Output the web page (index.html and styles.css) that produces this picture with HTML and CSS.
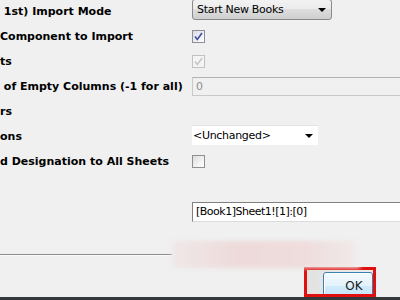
FILE: index.html
```html
<!DOCTYPE html>
<html lang="en">
<head>
    <meta charset="UTF-8">
    <title>Import Options</title>
    <link rel="stylesheet" href="styles.css">
</head>
<body>
    <div class="dialog">
        <div class="form">
            <div class="row">
                <span class="label">&nbsp;1st) Import Mode</span>
                <div class="combo combo-mode">
                    <span>Start New Books</span>
                    <span class="arrow"></span>
                </div>
            </div>
            <div class="row">
                <span class="label">Component to Import</span>
                <span class="check checked">
                    <svg width="9" height="9" viewBox="0 0 9 9"><path d="M1 4.5 L3.3 7.5 L8 1" fill="none" stroke="#3c4fa0" stroke-width="1.6"/></svg>
                </span>
            </div>
            <div class="row">
                <span class="label">ts</span>
                <span class="check disabled">
                    <svg width="9" height="9" viewBox="0 0 9 9"><path d="M1 4.5 L3.3 7.5 L8 1" fill="none" stroke="#c4c4c4" stroke-width="1.4"/></svg>
                </span>
            </div>
            <div class="row">
                <span class="label">&nbsp;of Empty Columns (-1 for all)</span>
                <div class="textbox textbox-disabled">0</div>
            </div>
            <div class="row">
                <span class="label">rs</span>
            </div>
            <div class="row">
                <span class="label">ons</span>
                <div class="combo combo-flat">
                    <span>&lt;Unchanged&gt;</span>
                    <span class="arrow"></span>
                </div>
            </div>
            <div class="row">
                <span class="label">d Designation to All Sheets</span>
                <span class="check"></span>
            </div>
            <div class="row"></div>
            <div class="row">
                <span class="label"></span>
                <div class="textbox textbox-range">[Book1]Sheet1![1]:[0]</div>
            </div>
        </div>

        <div class="band">
            <div class="rule"></div>
            <div class="glow"></div>
        </div>

        <div class="buttons">
            <div class="highlight">
                <button class="ok">OK</button>
            </div>
        </div>
    </div>
    <div class="taskbar"></div>
</body>
</html>
```

FILE: styles.css
```css
/* General Styles */
body {
    margin: 0;
    width: 400px;
    height: 300px;
    overflow: hidden;
    background-color: #f0f0f0;
    color: #000;
    font-family: Tahoma, "DejaVu Sans", sans-serif;
    display: flex;
    flex-direction: column;
}

.dialog {
    flex: 1;
    display: flex;
    flex-direction: column;
}

/* Form rows */
.form {
    margin-top: -1px;
}

.row {
    display: grid;
    grid-template-columns: 192px 1fr;
    height: 25px;
    align-items: center;
}

.label {
    font-family: "DejaVu Sans", Verdana, sans-serif;
    font-weight: bold;
    font-size: 11px;
    white-space: nowrap;
    overflow: hidden;
}

/* Combo boxes */
.combo {
    display: flex;
    align-items: center;
    justify-content: space-between;
    box-sizing: border-box;
    font-family: "DejaVu Sans", sans-serif;
    font-size: 11px;
    letter-spacing: -0.3px;
}

.combo-mode {
    align-self: start;
    width: 140px;
    height: 21px;
    padding: 0 5px 0 4px;
    border: 1px solid #8a8a8a;
    border-radius: 3px;
    background: linear-gradient(#f2f2f2, #ebebeb 50%, #dddddd 50%, #cfcfcf);
}

.combo-flat {
    align-self: start;
    margin-top: 1px;
    width: 126px;
    height: 20px;
    padding: 0 5px 0 1px;
    background: #fff;
    border-top: 1px solid #e2e2e2;
}

.arrow {
    width: 0;
    height: 0;
    border-left: 4px solid transparent;
    border-right: 4px solid transparent;
    border-top: 4px solid #000;
}

/* Check boxes */
.check {
    display: flex;
    align-items: center;
    justify-content: center;
    box-sizing: border-box;
    width: 13px;
    height: 13px;
    border: 1px solid #8f8f8f;
    background: linear-gradient(135deg, #dcdcdc, #f6f6f6 70%, #fff);
}

.check.checked {
    border-color: #8e8f96;
    background: linear-gradient(135deg, #d8dae6, #f4f4f8 70%, #fff);
}

.check.disabled {
    border-color: #c2c2c2;
    background: #f4f4f4;
}

/* Text boxes */
.textbox {
    box-sizing: border-box;
    width: 208px;
    padding-left: 3px;
    font-family: "DejaVu Sans", sans-serif;
    font-size: 11px;
    letter-spacing: -0.3px;
    display: flex;
    align-items: center;
}

.textbox-disabled {
    height: 19px;
    color: #8d8d8d;
    border: 1px solid #c9c9c9;
    border-top-color: #b2b2b2;
    border-right: none;
    background: #f0f0f0;
}

.textbox-range {
    height: 20px;
    color: #000;
    letter-spacing: -0.5px;
    background: #fff;
    border-top: 1px solid #808080;
    border-left: 1px solid #808080;
    border-bottom: 1px solid #dcdcdc;
}

/* Bottom area */
.band {
    margin-top: 18px;
    height: 25px;
    display: flex;
    align-items: center;
}

.rule {
    width: 172px;
    height: 1px;
    background: #8c8c8c;
    border-bottom: 1px solid #fafafa;
}

.glow {
    width: 188px;
    height: 27px;
    background: linear-gradient(to right, #efe8e8, #eedada 35%, #efdcdc 70%, #f0e8e8 95%, #f0f0f0);
    filter: blur(2px);
}

.buttons {
    display: flex;
    padding-left: 304px;
}

.highlight {
    width: 72px;
    height: 30px;
    box-sizing: border-box;
    border: 3px solid #e01010;
    padding: 2px 0 0 16px;
    overflow: hidden;
    background: linear-gradient(to right, #e2e2e2, #ececec);
}

.ok {
    width: 50px;
    height: 28px;
    padding: 0 0 0 12px;
    border: 1px solid #3c7fb1;
    border-radius: 3px;
    background: linear-gradient(#f3fafe, #e3f2fb 50%, #d0ebfa 50%, #c4e4f6);
    box-shadow: inset 1px 1px 0 #fff;
    font-family: "DejaVu Sans", sans-serif;
    font-size: 12px;
    color: #1a1a1a;
    text-align: center;
}

.taskbar {
    height: 3px;
    background: #34383c;
}
```
